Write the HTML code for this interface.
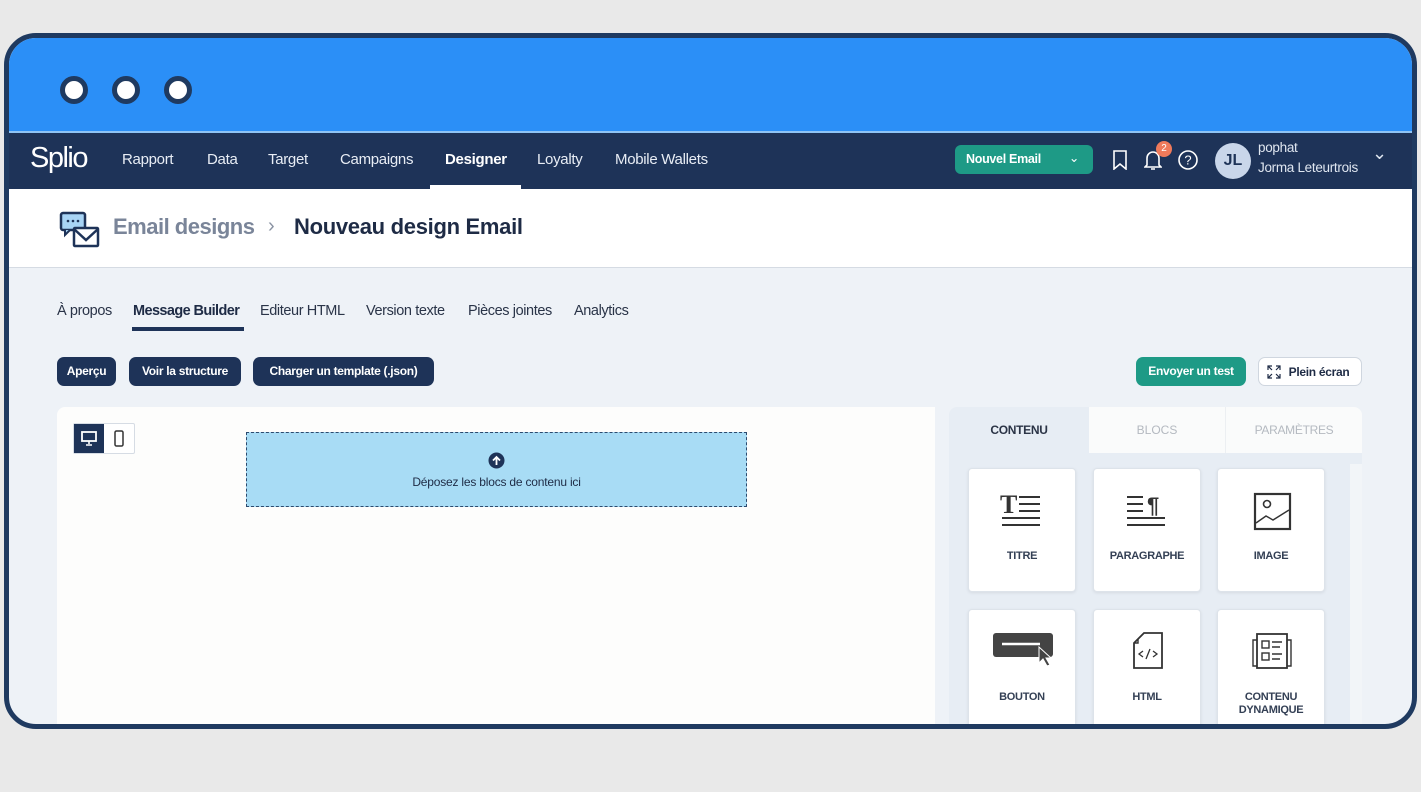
<!DOCTYPE html>
<html><head><meta charset="utf-8"><style>
*{box-sizing:border-box;margin:0;padding:0}
body{width:1421px;height:792px;background:#e9e9e9;font-family:"Liberation Sans",sans-serif;position:relative;overflow:hidden}
.frame{position:absolute;left:4px;top:33px;width:1413px;height:696px;border:5px solid #1f3a60;border-radius:32px;overflow:hidden;background:#eef2f7}
.top{position:absolute;left:0;top:0;width:100%;height:95px;background:#2b8ff7;border-bottom:2px solid #8fc4f5}
.dot{position:absolute;top:38px;width:28px;height:28px;border-radius:50%;background:#fff;border:5px solid #1f3a60}
.nav{position:absolute;left:0;top:95px;width:100%;height:56px;background:#1e3358;color:#fff}
.nav .logo{position:absolute;left:21px;top:9px;font-size:29px;letter-spacing:-1.5px}
.nav a{position:absolute;top:18px;font-size:15px;color:#e8edf5;letter-spacing:-0.3px}
.hdr{position:absolute;left:0;top:151px;width:100%;height:79px;background:#fff;border-bottom:1px solid #d5dbe3}
.t{position:absolute;white-space:nowrap}
.tab{position:absolute;top:265px;font-size:14.5px;color:#2a3448;letter-spacing:-0.4px;white-space:nowrap}
.btn{position:absolute;height:29px;background:#1e3358;color:#fff;border-radius:7px;font-size:12px;font-weight:bold;line-height:29px;text-align:center;letter-spacing:-0.3px;white-space:nowrap}
.card{position:absolute;width:108px;height:124px;background:#fff;border:1px solid #dde3ea;border-radius:4px;box-shadow:0 1px 3px rgba(0,0,0,.08)}
.card span{position:absolute;left:0;width:100%;text-align:center;font-size:11px;font-weight:bold;color:#344055;top:81px;line-height:13px;letter-spacing:-0.3px}
.card svg{position:absolute;left:29px;top:22px}
</style></head><body>
<div class="frame">
<div class="top"><div class="dot" style="left:51px"></div><div class="dot" style="left:103px"></div><div class="dot" style="left:155px"></div></div>
<div class="nav">
<div class="logo">Splio</div>
<a style="left:113px">Rapport</a><a style="left:198px">Data</a><a style="left:259px">Target</a><a style="left:331px">Campaigns</a>
<a style="left:436px;font-weight:bold;color:#fff">Designer</a><div style="position:absolute;left:421px;top:52px;width:91px;height:4px;background:#fff"></div>
<a style="left:528px">Loyalty</a><a style="left:606px">Mobile Wallets</a>
<div style="position:absolute;left:946px;top:12px;width:138px;height:29px;background:#1e9a86;border-radius:6px;font-size:12.5px;font-weight:bold;line-height:29px;padding-left:11px;letter-spacing:-0.3px">Nouvel Email <span style="position:absolute;right:14px;top:-1px;font-weight:normal">&#8964;</span></div>
<svg style="position:absolute;left:1103px;top:17px" width="16" height="20" viewBox="0 0 16 20"><path d="M2 1h12v18l-6-5-6 5z" fill="none" stroke="#fff" stroke-width="1.6"/></svg>
<svg style="position:absolute;left:1135px;top:16px" width="18" height="22" viewBox="0 0 18 22"><path d="M3 16V9a6 6 0 0 1 12 0v7l2 2H1zM7 20h4" fill="none" stroke="#fff" stroke-width="1.6"/></svg>
<div style="position:absolute;left:1147px;top:8px;width:16px;height:16px;border-radius:50%;background:#ef7a5b;font-size:10px;text-align:center;line-height:16px">2</div>
<svg style="position:absolute;left:1168px;top:16px" width="22" height="22" viewBox="0 0 22 22"><circle cx="11" cy="11" r="9" fill="none" stroke="#fff" stroke-width="1.6"/><text x="11" y="15.5" font-size="13" text-anchor="middle" fill="#fff" font-family="Liberation Sans">?</text></svg>
<div style="position:absolute;left:1206px;top:10px;width:36px;height:36px;border-radius:50%;background:#c9d6ea;color:#1e3358;font-weight:bold;font-size:16px;text-align:center;line-height:36px">JL</div>
<div class="t" style="left:1249px;top:7px;font-size:13.5px;color:#dfe6f0;letter-spacing:-0.3px">pophat</div>
<div class="t" style="left:1249px;top:27px;font-size:13.5px;color:#dfe6f0;letter-spacing:-0.3px">Jorma Leteurtrois</div>
<div class="t" style="left:1363px;top:10px;font-size:18px;color:#dfe6f0">&#8964;</div>
</div>
<div class="hdr">
<svg style="position:absolute;left:50px;top:22px" width="42" height="38" viewBox="0 0 42 38"><rect x="2" y="2" width="24" height="17" rx="2" fill="#a8d4f5" stroke="#1e3358" stroke-width="2.5"/><path d="M6 19v5l5-5" fill="#a8d4f5" stroke="#1e3358" stroke-width="2"/><circle cx="9" cy="10" r="1.3" fill="#1e3358"/><circle cx="14" cy="10" r="1.3" fill="#1e3358"/><circle cx="19" cy="10" r="1.3" fill="#1e3358"/><rect x="15" y="17" width="24" height="18" rx="1" fill="#fff" stroke="#1e3358" stroke-width="2.5"/><path d="M15 18l12 11 12-11" fill="none" stroke="#1e3358" stroke-width="2.5"/></svg>
<div class="t" style="left:104px;top:25px;font-size:22px;font-weight:bold;color:#7a8599;letter-spacing:-0.5px">Email designs</div>
<div class="t" style="left:259px;top:26px;font-size:20px;color:#8a93a3">&#8250;</div>
<div class="t" style="left:285px;top:25px;font-size:22px;font-weight:bold;color:#1e2b45;letter-spacing:-0.3px">Nouveau design Email</div>
</div>
<div class="tab" style="left:48px">À propos</div>
<div class="tab" style="left:124px;color:#1e2b45;font-weight:bold;letter-spacing:-0.6px">Message Builder</div>
<div style="position:absolute;left:123px;top:289px;width:112px;height:4px;background:#1e3358"></div>
<div class="tab" style="left:251px">Editeur HTML</div>
<div class="tab" style="left:357px">Version texte</div>
<div class="tab" style="left:459px">Pièces jointes</div>
<div class="tab" style="left:565px">Analytics</div>
<div class="btn" style="left:48px;top:319px;width:59px">Aperçu</div>
<div class="btn" style="left:120px;top:319px;width:112px">Voir la structure</div>
<div class="btn" style="left:244px;top:319px;width:181px">Charger un template (.json)</div>
<div class="btn" style="left:1127px;top:319px;width:110px;background:#1e9a86">Envoyer un test</div>
<div class="btn" style="left:1249px;top:319px;width:104px;background:#fff;color:#1e2b45;border:1px solid #cfd6df;padding-left:18px">Plein écran</div>
<svg style="position:absolute;left:1258px;top:327px" width="14" height="14" viewBox="0 0 14 14" fill="none" stroke="#1e2b45" stroke-width="1.2"><path d="M1 5V1h4M1 1l4 4M13 5V1H9M13 1L9 5M1 9v4h4M1 13l4-4M13 9v4H9M13 13L9 9"/></svg>
<div style="position:absolute;left:48px;top:369px;width:878px;height:320px;background:#fdfdfc;border-radius:8px 0 0 0"></div>
<div style="position:absolute;left:64px;top:385px;width:62px;height:31px;border:1px solid #d6dce4;background:#fff;border-radius:2px"></div>
<div style="position:absolute;left:65px;top:386px;width:30px;height:29px;background:#1e3358"></div>
<svg style="position:absolute;left:72px;top:393px" width="16" height="15" viewBox="0 0 16 15"><rect x="1" y="1" width="14" height="9" fill="none" stroke="#fff" stroke-width="1.8"/><path d="M8 10v3M5 14h6" stroke="#fff" stroke-width="1.6"/></svg>
<svg style="position:absolute;left:105px;top:392px" width="10" height="17" viewBox="0 0 10 17"><rect x="1" y="1" width="8" height="15" rx="1.5" fill="none" stroke="#333" stroke-width="1.5"/></svg>
<div style="position:absolute;left:237px;top:394px;width:501px;height:75px;background:#a8dcf5;border:1px dashed #2c4a6e"></div>
<svg style="position:absolute;left:479px;top:414px" width="17" height="17" viewBox="0 0 17 17"><circle cx="8.5" cy="8.5" r="8" fill="#1e3358"/><path d="M8.5 13V5M5 8.5l3.5-3.5 3.5 3.5" stroke="#fff" stroke-width="1.8" fill="none"/></svg>
<div class="t" style="left:237px;width:501px;text-align:center;top:437px;font-size:12px;color:#1e2b45;letter-spacing:-0.2px">Déposez les blocs de contenu ici</div>
<div style="position:absolute;left:940px;top:369px;width:413px;height:320px;background:#e7edf4;border-radius:8px 8px 0 0"></div>
<div style="position:absolute;left:1080px;top:369px;width:273px;height:46px;background:#fafbfb;border-radius:0 8px 0 0"></div>
<div style="position:absolute;left:1216px;top:369px;width:1px;height:46px;background:#eceff2"></div>
<div class="t" style="left:940px;width:140px;text-align:center;top:385px;font-size:12px;font-weight:bold;color:#2b3446;letter-spacing:-0.3px">CONTENU</div>
<div class="t" style="left:1080px;width:136px;text-align:center;top:385px;font-size:12px;color:#b4b9c0">BLOCS</div>
<div class="t" style="left:1217px;width:136px;text-align:center;top:385px;font-size:12px;color:#b4b9c0;letter-spacing:-0.3px">PARAMÈTRES</div>
<div style="position:absolute;left:1341px;top:426px;width:12px;height:263px;background:#f2f5f8"></div>
<div class="card" style="left:959px;top:430px"><svg width="48" height="40" viewBox="0 0 48 40" fill="none" stroke="#333" stroke-width="2"><text x="2" y="22" font-size="26" fill="#333" stroke="none" font-weight="bold" font-family="Liberation Serif">T</text><path d="M21 6h21M21 13h21M21 20h21M4 27h38M4 34h38"/></svg><span>TITRE</span></div>
<div class="card" style="left:1084px;top:430px"><svg width="48" height="40" viewBox="0 0 48 40" fill="none" stroke="#333" stroke-width="2"><path d="M4 6h16M4 13h16M4 20h16M4 27h38M4 34h38"/><text x="24" y="22" font-size="22" fill="#333" stroke="none" font-weight="bold" font-family="Liberation Sans">¶</text></svg><span>PARAGRAPHE</span></div>
<div class="card" style="left:1208px;top:430px"><svg width="48" height="40" viewBox="0 0 48 40" fill="none" stroke="#333" stroke-width="2.2"><rect x="8" y="3" width="35" height="35"/><circle cx="20" cy="13" r="3.5" stroke-width="1.6"/><path d="M9 32l10-7 7 4 16-10" stroke-width="1.4"/></svg><span>IMAGE</span></div>
<div class="card" style="left:959px;top:571px"><svg width="62" height="40" viewBox="0 0 62 40" style="left:23px"><rect x="1" y="1" width="60" height="24" rx="3" fill="#444"/><path d="M10 12h38" stroke="#fff" stroke-width="2.5"/><path d="M47 15v16l4-4 4 7 3-1-4-7h5z" fill="#444" stroke="#fff" stroke-width="1"/></svg><span>BOUTON</span></div>
<div class="card" style="left:1084px;top:571px"><svg width="48" height="40" viewBox="0 0 48 40" fill="none" stroke="#333" stroke-width="1.8"><path d="M15 7l6-6h18v35H11V11z"/><path d="M15 7v4h-4" stroke-width="1.4"/><path d="M20 19l-4 3 4 3M30 19l4 3-4 3M27 17l-4 10" stroke-width="1.3"/></svg><span>HTML</span></div>
<div class="card" style="left:1208px;top:571px"><svg width="48" height="40" viewBox="0 0 48 40" fill="none" stroke="#333" stroke-width="1.8"><rect x="10" y="2" width="30" height="34"/><path d="M10 8H6v26h4M40 8h4v26h-4" stroke-width="1.4"/><rect x="15" y="9" width="7" height="7" stroke-width="1.4"/><rect x="15" y="21" width="7" height="7" stroke-width="1.4"/><path d="M25 10h10M25 15h8M25 22h10M25 27h8" stroke-width="1.4"/></svg><span>CONTENU<br>DYNAMIQUE</span></div>
</div>
</body></html>
